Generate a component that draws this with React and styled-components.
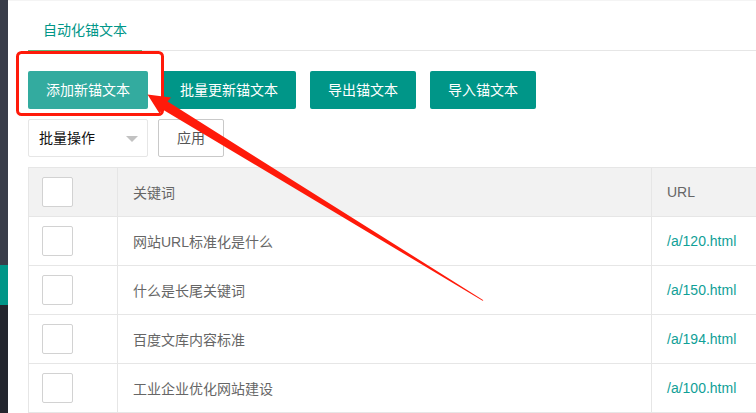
import React from "react";
import styled, { createGlobalStyle } from "styled-components";

const Global = createGlobalStyle`
  html, body { margin: 0; padding: 0; background: #fff; }
  body { font-family: "Liberation Sans", "Noto Sans CJK SC", sans-serif; font-size: 14px; color: #666; overflow: hidden; }
  * { box-sizing: border-box; }
`;

const Page = styled.div`
  position: relative;
  display: flex;
  width: 756px;
  height: 413px;
  overflow: hidden;
`;

const Sidebar = styled.div`
  width: 8px;
  flex: none;
  display: flex;
  flex-direction: column;
`;

const SideBlock = styled.div`
  height: ${(p) => (p.$h ? `${p.$h}px` : "auto")};
  flex: ${(p) => (p.$h ? "none" : "1")};
  background: ${(p) => p.$c};
`;

const Main = styled.div`
  flex: 1;
  min-width: 0;
  padding: 10px 0 0 20px;
  overflow: hidden;
  border-top: 1px solid #f4f4f4;
`;

const TabBar = styled.div`
  display: flex;
  height: 40px;
  border-bottom: 1px solid #e6e6e6;
  box-sizing: content-box;
  margin-top: -1px;
`;

const Tab = styled.div`
  position: relative;
  padding: 0 15px;
  line-height: 40px;
  font-size: 14px;
  color: ${(p) => (p.$active ? "#009688" : "#333")};
  &::after {
    content: "";
    display: ${(p) => (p.$active ? "block" : "none")};
    position: absolute;
    left: 0;
    right: 0;
    bottom: -2px;
    border-bottom: 2px solid #5fb878;
  }
`;

const Toolbar = styled.div`
  display: flex;
  gap: 14px;
  margin-top: 20px;
`;

const Button = styled.div`
  height: 38px;
  line-height: 38px;
  padding: 0 18px;
  border-radius: 2px;
  font-size: 14px;
  color: #fff;
  white-space: nowrap;
  background: ${(p) => (p.$light ? "#33ab9f" : "#009688")};
`;

const Controls = styled.div`
  display: flex;
  gap: 10px;
  margin-top: 10px;
`;

const Select = styled.div`
  position: relative;
  width: 120px;
  height: 38px;
  line-height: 36px;
  padding-left: 10px;
  border: 1px solid #e6e6e6;
  border-radius: 2px;
  color: #111;
  font-size: 14px;
  &::after {
    content: "";
    position: absolute;
    right: 9px;
    top: 16px;
    border-left: 6px solid transparent;
    border-right: 6px solid transparent;
    border-top: 6px solid #c2c2c2;
  }
`;

const PlainButton = styled.div`
  height: 38px;
  line-height: 36px;
  padding: 0 18px;
  border: 1px solid #c9c9c9;
  border-radius: 2px;
  color: #555;
  font-size: 14px;
`;

const Table = styled.div`
  margin-top: 10px;
  width: 800px;
  display: grid;
  grid-template-columns: 89px 534px 1fr;
  border-left: 1px solid #e6e6e6;
  border-top: 1px solid #e6e6e6;
`;

const Cell = styled.div`
  height: 49px;
  display: flex;
  align-items: center;
  padding-left: ${(p) => (p.$check ? "13px" : "15px")};
  border-right: 1px solid #e6e6e6;
  border-bottom: 1px solid #e6e6e6;
  background: ${(p) => (p.$head ? "#f2f2f2" : "#fff")};
  color: ${(p) => (p.$link ? "#10a097" : "#666")};
  font-size: 14px;
  white-space: nowrap;
`;

const Check = styled.div`
  width: 31px;
  height: 30px;
  border: 1px solid #d2d2d2;
  border-radius: 2px;
  background: #fff;
`;

const Overlay = styled.svg`
  position: absolute;
  left: 0;
  top: 0;
  pointer-events: none;
`;

const rows = [
  ["网站URL标准化是什么", "/a/120.html"],
  ["什么是长尾关键词", "/a/150.html"],
  ["百度文库内容标准", "/a/194.html"],
  ["工业企业优化网站建设", "/a/100.html"],
];

export default function App() {
  return (
    <>
      <Global />
      <Page>
        <Sidebar>
          <SideBlock $h={265} $c="#393d49" />
          <SideBlock $h={40} $c="#009688" />
          <SideBlock $c="#23262e" />
        </Sidebar>
        <Main>
          <TabBar>
            <Tab $active>自动化锚文本</Tab>
          </TabBar>
          <Toolbar>
            <Button $light>添加新锚文本</Button>
            <Button>批量更新锚文本</Button>
            <Button>导出锚文本</Button>
            <Button>导入锚文本</Button>
          </Toolbar>
          <Controls>
            <Select>批量操作</Select>
            <PlainButton>应用</PlainButton>
          </Controls>
          <Table>
            <Cell $head $check>
              <Check />
            </Cell>
            <Cell $head>关键词</Cell>
            <Cell $head>URL</Cell>
            {rows.map(([k, u]) => (
              <React.Fragment key={u}>
                <Cell $check>
                  <Check />
                </Cell>
                <Cell>{k}</Cell>
                <Cell $link>{u}</Cell>
              </React.Fragment>
            ))}
          </Table>
        </Main>
        <Overlay width="756" height="413" viewBox="0 0 756 413">
          <rect x="17.5" y="52.5" width="145" height="62" rx="4" ry="4" fill="none" stroke="#ff1a0a" strokeWidth="3" />
          <polygon
            points="147.5,94.5 171,97.5 167.6,101.6 483.4,300.2 482.6,300.8 162.6,109.4 159.5,113.5"
            fill="#ff1a0a"
          />
        </Overlay>
      </Page>
    </>
  );
}
